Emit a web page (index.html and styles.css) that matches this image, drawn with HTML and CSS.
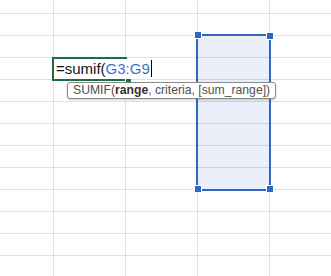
FILE: index.html
```html
<!DOCTYPE html>
<html lang="en">
<head>
    <meta charset="UTF-8">
    <meta name="viewport" content="width=device-width, initial-scale=1.0">
    <title>SUMIF</title>
    <link rel="stylesheet" href="styles.css">
</head>
<body>
    <div class="sheet">
        <div class="grid" id="grid"></div>

        <!-- 参照範囲 G3:G9 -->
        <div class="range">
            <span class="knob tl"></span>
            <span class="knob tr"></span>
            <span class="knob bl"></span>
            <span class="knob br"></span>
        </div>

        <!-- 編集中のセル -->
        <div class="editor">
            <span class="edit-text">=sumif(<span class="ref">G3:G9</span><span class="caret"></span></span>
            <span class="fill-handle"></span>
        </div>

        <div class="tip">SUMIF(<b>range</b>, criteria, [sum_range])</div>
    </div>
    <script>
        let grid = document.getElementById('grid');
        let rows = 13;
        let cols = 5;
        for (let i = 0; i < rows * cols; i++) {
            let cell = document.createElement('div');
            cell.className = 'cell';
            grid.appendChild(cell);
        }
    </script>
</body>
</html>
```

FILE: styles.css
```css
*{margin: 0;padding: 0;box-sizing: border-box;}
body{
    width: 100%;
    background: #fff;
    overflow: hidden;
    font-family: "Liberation Sans", Arial, sans-serif;
}
.sheet{
    position: relative;
    width: 331px;
    height: 276px;
    overflow: hidden;
}
.grid{
    display: grid;
    grid-template-columns: 54px repeat(4, 72px);
    grid-template-rows: 14px repeat(12, 22px);
}
.cell{
    border-right: 1px solid #e0e0e0;
    border-bottom: 1px solid #e0e0e0;
}
/* 選択範囲 */
.range{
    position: absolute;
    left: 196px;
    top: 34px;
    width: 75px;
    height: 157px;
    border: 2px solid #3165c6;
    background: rgba(40, 90, 200, 0.1);
}
.knob{
    position: absolute;
    width: 8px;
    height: 8px;
    background: #3165c6;
    border: 1px solid #fff;
}
.tl{left: -4px; top: -5px;}
.tr{right: -5px; top: -4px;}
.bl{left: -4px; bottom: -4px;}
.br{right: -5px; bottom: -4px;}
/* 入力中セル */
.editor{
    position: absolute;
    left: 52px;
    top: 57px;
    width: 75px;
    height: 24px;
    border: 2px solid #1f6e43;
    border-right: none;
}
.edit-text{
    display: inline-block;
    height: 20px;
    padding: 0 6px 0 2px;
    background: #fff;
    white-space: nowrap;
    font-size: 15px;
    line-height: 20px;
    color: #111;
}
.ref{
    color: #3a72d0;
}
.caret{
    display: inline-block;
    width: 1px;
    height: 17px;
    margin-left: 1px;
    background: #000;
    vertical-align: -3px;
}
.fill-handle{
    position: absolute;
    left: 71px;
    top: 19px;
    width: 6px;
    height: 5px;
    background: #1f6e43;
    border-left: 1px solid #fff;
    border-top: 1px solid #fff;
}
/* 関数ヒント */
.tip{
    position: absolute;
    left: 67px;
    top: 82px;
    height: 17px;
    padding: 0 5px;
    border: 1px solid #8a8a8a;
    border-radius: 3px;
    background: #fff;
    box-shadow: 0 1px 2px rgba(0, 0, 0, 0.2);
    font-size: 12.2px;
    line-height: 15px;
    color: #505050;
    white-space: nowrap;
}
.tip b{
    color: #333;
}
```
